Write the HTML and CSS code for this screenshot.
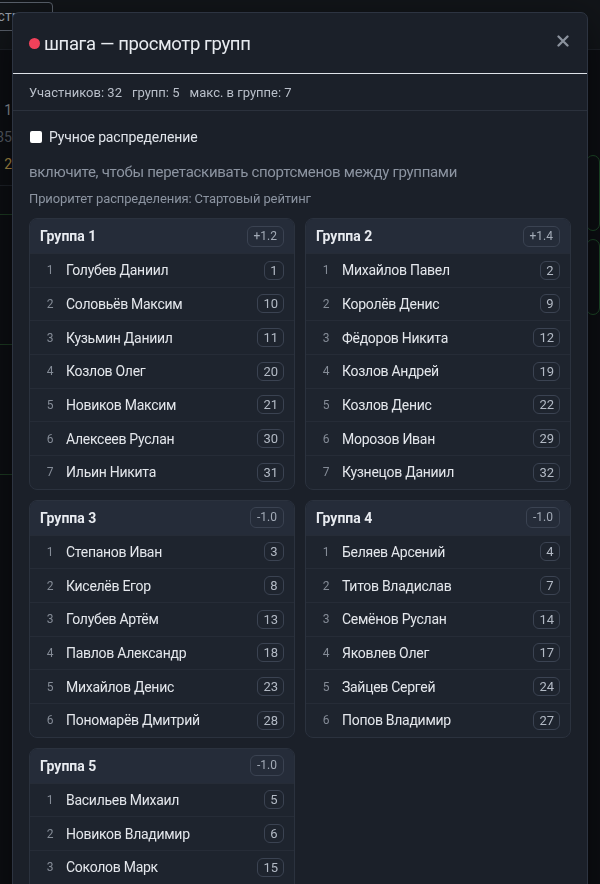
FILE: index.html
```html
<!DOCTYPE html>
<html lang="ru">
<head>
<meta charset="utf-8">
<title>шпага — просмотр групп</title>
<link rel="stylesheet" href="styles.css">
</head>
<body>
<div class="page">
  <div class="topbar">
    <span class="top-btn">Реестр</span>
  </div>
  <div class="side">
    <div class="side-row"><span class="side-muted">1</span></div>
    <div class="side-row"><span class="side-dim">35</span></div>
    <div class="side-row"><span class="side-gold">2</span></div>
    <div class="side-sep"></div>
    <div class="side-block"></div>
    <div class="side-block"></div>
    <div class="side-block"></div>
  </div>
  <div class="right">
    <div class="right-card"></div>
    <div class="right-card"></div>
  </div>
</div>

<div class="modal">
  <div class="modal-head">
    <span class="dot"></span>
    <h1 class="modal-title">шпага — просмотр групп</h1>
    <svg class="close" width="12" height="12" viewBox="0 0 12 12"><path d="M1.5 1.5 L10.5 10.5 M10.5 1.5 L1.5 10.5" stroke="#8b929d" stroke-width="2.3" stroke-linecap="round"/></svg>
  </div>
  <div class="stats">
    <span>Участников: 32</span>
    <span>групп: 5</span>
    <span>макс. в группе: 7</span>
  </div>
  <div class="modal-body">
    <label class="manual"><span class="box"></span>Ручное распределение</label>
    <p class="hint">включите, чтобы перетаскивать спортсменов между группами</p>
    <p class="prio">Приоритет распределения: Стартовый рейтинг</p>

    <div class="groups">
      <div class="group">
        <div class="g-head"><span class="g-title">Группа 1</span><span class="g-badge">+1.2</span></div>
        <div class="row"><span class="n">1</span><span class="name">Голубев Даниил</span><span class="seed">1</span></div>
        <div class="row"><span class="n">2</span><span class="name">Соловьёв Максим</span><span class="seed">10</span></div>
        <div class="row"><span class="n">3</span><span class="name">Кузьмин Даниил</span><span class="seed">11</span></div>
        <div class="row"><span class="n">4</span><span class="name">Козлов Олег</span><span class="seed">20</span></div>
        <div class="row"><span class="n">5</span><span class="name">Новиков Максим</span><span class="seed">21</span></div>
        <div class="row"><span class="n">6</span><span class="name">Алексеев Руслан</span><span class="seed">30</span></div>
        <div class="row"><span class="n">7</span><span class="name">Ильин Никита</span><span class="seed">31</span></div>
      </div>
      <div class="group">
        <div class="g-head"><span class="g-title">Группа 2</span><span class="g-badge">+1.4</span></div>
        <div class="row"><span class="n">1</span><span class="name">Михайлов Павел</span><span class="seed">2</span></div>
        <div class="row"><span class="n">2</span><span class="name">Королёв Денис</span><span class="seed">9</span></div>
        <div class="row"><span class="n">3</span><span class="name">Фёдоров Никита</span><span class="seed">12</span></div>
        <div class="row"><span class="n">4</span><span class="name">Козлов Андрей</span><span class="seed">19</span></div>
        <div class="row"><span class="n">5</span><span class="name">Козлов Денис</span><span class="seed">22</span></div>
        <div class="row"><span class="n">6</span><span class="name">Морозов Иван</span><span class="seed">29</span></div>
        <div class="row"><span class="n">7</span><span class="name">Кузнецов Даниил</span><span class="seed">32</span></div>
      </div>
      <div class="group">
        <div class="g-head"><span class="g-title">Группа 3</span><span class="g-badge">-1.0</span></div>
        <div class="row"><span class="n">1</span><span class="name">Степанов Иван</span><span class="seed">3</span></div>
        <div class="row"><span class="n">2</span><span class="name">Киселёв Егор</span><span class="seed">8</span></div>
        <div class="row"><span class="n">3</span><span class="name">Голубев Артём</span><span class="seed">13</span></div>
        <div class="row"><span class="n">4</span><span class="name">Павлов Александр</span><span class="seed">18</span></div>
        <div class="row"><span class="n">5</span><span class="name">Михайлов Денис</span><span class="seed">23</span></div>
        <div class="row"><span class="n">6</span><span class="name">Пономарёв Дмитрий</span><span class="seed">28</span></div>
      </div>
      <div class="group">
        <div class="g-head"><span class="g-title">Группа 4</span><span class="g-badge">-1.0</span></div>
        <div class="row"><span class="n">1</span><span class="name">Беляев Арсений</span><span class="seed">4</span></div>
        <div class="row"><span class="n">2</span><span class="name">Титов Владислав</span><span class="seed">7</span></div>
        <div class="row"><span class="n">3</span><span class="name">Семёнов Руслан</span><span class="seed">14</span></div>
        <div class="row"><span class="n">4</span><span class="name">Яковлев Олег</span><span class="seed">17</span></div>
        <div class="row"><span class="n">5</span><span class="name">Зайцев Сергей</span><span class="seed">24</span></div>
        <div class="row"><span class="n">6</span><span class="name">Попов Владимир</span><span class="seed">27</span></div>
      </div>
      <div class="group">
        <div class="g-head"><span class="g-title">Группа 5</span><span class="g-badge">-1.0</span></div>
        <div class="row"><span class="n">1</span><span class="name">Васильев Михаил</span><span class="seed">5</span></div>
        <div class="row"><span class="n">2</span><span class="name">Новиков Владимир</span><span class="seed">6</span></div>
        <div class="row"><span class="n">3</span><span class="name">Соколов Марк</span><span class="seed">15</span></div>
        <div class="row"><span class="n">4</span><span class="name">Смирнов Илья</span><span class="seed">16</span></div>
        <div class="row"><span class="n">5</span><span class="name">Лебедев Кирилл</span><span class="seed">25</span></div>
        <div class="row"><span class="n">6</span><span class="name">Орлов Тимофей</span><span class="seed">26</span></div>
      </div>
    </div>
  </div>
</div>
</body>
</html>
```

FILE: styles.css
```css
* { box-sizing: border-box; }
html, body { margin: 0; padding: 0; }
body {
  background: #0c0e12;
  font-family: Roboto, "Liberation Sans", sans-serif;
  color: #e4e7ec;
  width: 600px;
  height: 884px;
  overflow: hidden;
}

/* background page */
.page { display: flex; flex-wrap: wrap; }
.topbar {
  width: 100%;
  height: 50px;
  background: #121519;
  border-bottom: 1px solid #1d2128;
  display: flex;
  align-items: flex-start;
}
.top-btn {
  margin-left: -37px;
  margin-top: 2px;
  padding: 5px 32px 6px 10px;
  border: 1px solid #5a616c;
  border-radius: 4px;
  color: #9aa1ab;
  font-size: 14px;
}
.side { width: 40px; display: flex; flex-direction: column; font-size: 14px; padding-top: 46px; }
.side-row { height: 27px; display: flex; align-items: center; justify-content: flex-end; padding-right: 28px; }
.side-muted { color: #8a9099; }
.side-dim { color: #555b64; }
.side-gold { color: #a98a45; }
.side-sep { height: 1px; background: #1d2128; margin: 8px 0 18px; }
.side-block {
  height: 120px;
  border-top: 1px solid #1c3a22;
  margin-top: 10px;
}
.right { margin-left: auto; width: 14px; padding-top: 105px; display: flex; flex-direction: column; gap: 8px; }
.right-card {
  height: 76px;
  border: 1px solid #1d4a28;
  border-radius: 8px;
}

/* modal */
.modal {
  position: fixed;
  left: 12px;
  top: 12px;
  width: 576px;
  height: 900px;
  background: #1b2029;
  border: 1px solid #2d3441;
  border-radius: 7px;
  box-shadow: 0 10px 40px rgba(0,0,0,0.5);
  overflow: hidden;
}
.modal-head {
  height: 61px;
  display: flex;
  align-items: center;
  padding: 0 18px 0 16px;
  border-bottom: 1px solid #dfe3e9;
}
.dot {
  width: 11px; height: 11px;
  border-radius: 50%;
  background: #f0415a;
  margin-right: 4px;
  margin-top: 1px;
}
.modal-title {
  margin: 0;
  font-size: 18.5px;
  font-weight: 400;
  letter-spacing: -0.02em;
  color: #e8ebf0;
  flex: 1;
  padding-top: 1px;
}
.close { margin-top: -5px; }
.stats {
  height: 37px;
  display: flex;
  align-items: center;
  gap: 10px;
  padding: 0 16px;
  font-size: 13px;
  color: #b9bfc9;
  border-bottom: 1px solid #2b313c;
}
.modal-body { padding: 18px 16px 16px; }
.manual {
  display: flex;
  align-items: center;
  font-size: 14px;
  letter-spacing: -0.01em;
  color: #e0e4ea;
}
.box {
  width: 12px; height: 12px;
  background: #ffffff;
  border-radius: 2px;
  margin: 0 7px 0 1px;
}
.hint {
  margin: 18px 0 0;
  font-size: 15px;
  letter-spacing: -0.02em;
  color: #8c94a1;
}
.prio {
  margin: 10px 0 0;
  font-size: 13px;
  letter-spacing: -0.01em;
  color: #8c94a1;
}

.groups {
  margin-top: 12px;
  display: grid;
  grid-template-columns: 1fr 1fr;
  gap: 10px;
  align-items: start;
}
.group {
  background: #1e242e;
  border: 1px solid #2b323e;
  border-radius: 8px;
  overflow: hidden;
}
.g-head {
  height: 34px;
  background: #252c39;
  display: flex;
  align-items: center;
  justify-content: space-between;
  padding: 0 10px;
}
.g-title { font-size: 14px; font-weight: 700; color: #e8ebf0; }
.g-badge {
  height: 21px;
  line-height: 19px;
  padding: 0 6px;
  border: 1px solid #3b4352;
  border-radius: 6px;
  font-size: 12px;
  color: #a3abb7;
}
.row {
  height: 33.67px;
  display: flex;
  align-items: center;
  padding: 0 10px;
  border-top: 1px solid #262c37;
}
.n {
  width: 20px;
  text-align: center;
  font-size: 12px;
  color: #858c97;
  margin-right: 6px;
}
.name { flex: 1; font-size: 14px; letter-spacing: -0.02em; color: #e4e7ec; }
.seed {
  min-width: 20px;
  height: 19px;
  line-height: 17px;
  padding: 0 5px;
  text-align: center;
  border: 1px solid #3b4352;
  border-radius: 6px;
  font-size: 13px;
  color: #b3bac5;
}
```
